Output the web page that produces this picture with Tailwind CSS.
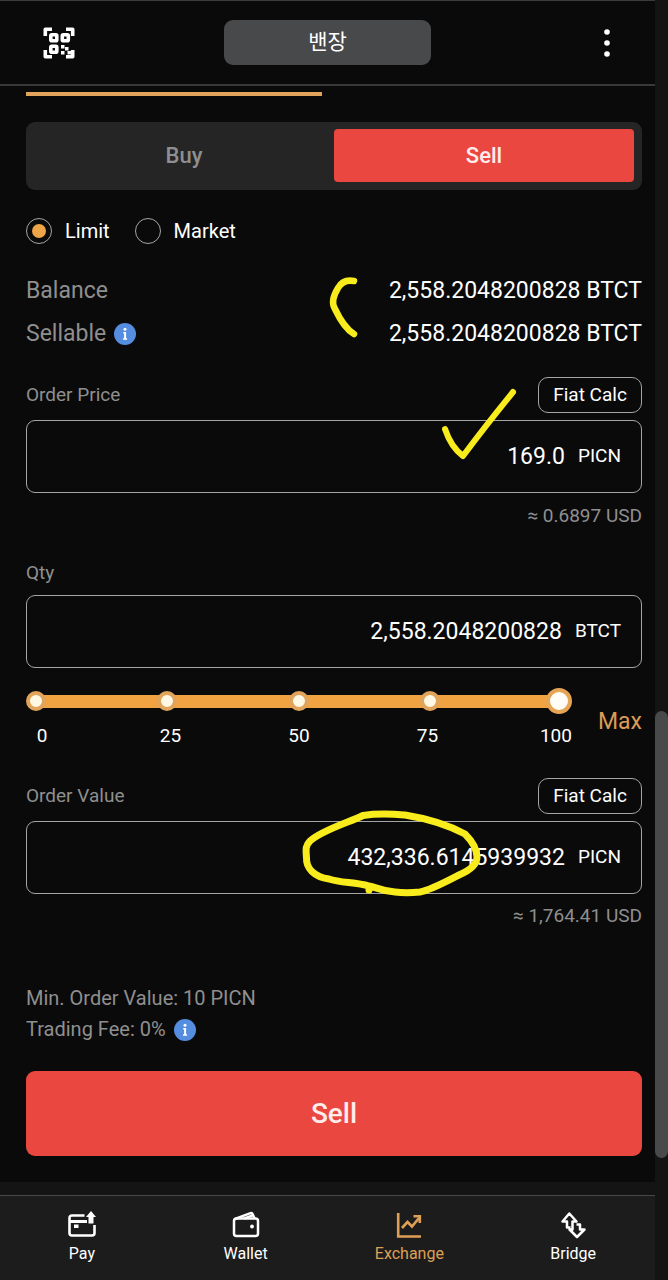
<!DOCTYPE html>
<html lang="en">
<head>
    <meta charset="UTF-8">
    <meta name="viewport" content="width=device-width, initial-scale=1.0">
    <title>Exchange</title>
    <script src="https://cdn.jsdelivr.net/npm/@tailwindcss/browser@4"></script>
</head>
<body class="bg-[#141414] text-white font-['Roboto','Noto_Sans_CJK_KR',sans-serif]">
<div class="relative flex min-h-screen">
    <div class="flex-1 min-w-0 flex flex-col">
        <!-- Header -->
        <header class="flex items-center justify-between h-[86px] px-8 bg-[#0a0a0a] border-t border-b-2 border-t-[#3a3b3c] border-b-[#38393a]">
            <button class="w-[54px] h-9 flex items-center justify-center" aria-label="Scan QR code">
                <svg class="w-8 h-8" viewBox="0 0 32 32" fill="none" stroke="#fff" stroke-width="3.600">
                    <path d="M2.300 9V2.300H9M23 2.300h6.700V9M2.300 23v6.700H9M23 29.700h6.700V23" stroke-linejoin="round"/>
                    <rect x="7.800" y="7.800" width="6" height="6" rx="1"/>
                    <rect x="19.300" y="7.800" width="6" height="6" rx="1"/>
                    <rect x="7.800" y="19.300" width="6" height="6" rx="1"/>
                    <path d="M18 18h3.500v3.500h-3.500zM22 20h3.500v3.500h-3.500zM18 24h3.500v3.500h-3.500zM24.500 24h3.500v3.500h-3.500z" fill="#fff" stroke="none"/>
                </svg>
            </button>
            <button class="w-[207px] h-[45px] rounded-[9px] bg-[#48494b] text-[21px]">밴장</button>
            <button class="w-[54px] h-9 flex items-center justify-end" aria-label="Menu">
                <svg class="w-8 h-8" viewBox="0 0 32 32" fill="#fff">
                    <circle cx="16" cy="5" r="2.800"/>
                    <circle cx="16" cy="16" r="2.800"/>
                    <circle cx="16" cy="27" r="2.800"/>
                </svg>
            </button>
        </header>

        <main class="bg-[#0a0a0a] pl-[26px] pr-[13px] pt-[6px] pb-[26px]">
            <div class="w-[48%] h-1 bg-[#e0a45c]"></div>

            <!-- Buy / Sell switch -->
            <div class="mt-[26px] h-[68px] px-2 pt-[7px] pb-2 rounded-[9px] bg-[#252525] flex text-[22px] font-medium">
                <button class="flex-1 text-[#8f8f8f]">Buy</button>
                <button class="flex-1 rounded bg-[#e9473f] text-[#ffeceb]">Sell</button>
            </div>

            <!-- Order type -->
            <div class="mt-7 flex gap-[25px] text-xl leading-[26px]">
                <label class="flex items-center gap-[13px]">
                    <input type="radio" name="type" checked class="appearance-none w-[26px] h-[26px] rounded-full border border-[#a5a5a5] p-[5px] bg-clip-content checked:bg-[#eda548]">
                    Limit
                </label>
                <label class="flex items-center gap-[13px]">
                    <input type="radio" name="type" class="appearance-none w-[26px] h-[26px] rounded-full border border-[#a5a5a5] p-[5px] bg-clip-content checked:bg-[#eda548]">
                    Market
                </label>
            </div>

            <!-- Balance -->
            <dl class="mt-[33px] flex flex-col gap-[15px] text-[23px] leading-7">
                <div class="flex justify-between">
                    <dt class="text-[#8f8f8f]">Balance</dt>
                    <dd>2,558.2048200828 BTCT</dd>
                </div>
                <div class="flex justify-between">
                    <dt class="flex items-center gap-2 text-[#8f8f8f]">
                        Sellable
                        <svg class="w-[22px] h-[22px]" viewBox="0 0 22 22" fill="#fff">
                            <circle cx="11" cy="11" r="11" fill="#558de0"/>
                            <circle cx="11" cy="6.200" r="1.500"/>
                            <path d="M9.200 9h2.900v6.300h1v1.500H9v-1.500h1.100v-4.800h-.9z"/>
                        </svg>
                    </dt>
                    <dd>2,558.2048200828 BTCT</dd>
                </div>
            </dl>

            <!-- Order price -->
            <section class="mt-[29px]">
                <div class="flex items-center justify-between">
                    <label for="price" class="text-[19px] text-[#8f8f8f]">Order Price</label>
                    <button class="w-[104px] h-9 rounded-[10px] border border-[#a5a5a5] text-[19px]">Fiat Calc</button>
                </div>
                <div class="mt-[7px] h-[73px] px-5 flex items-center gap-[13px] rounded-[9px] border border-[#a5a5a5]">
                    <input id="price" type="text" value="169.0" class="flex-1 min-w-0 pt-0.5 text-right text-[23px] outline-none">
                    <span class="text-[19px]">PICN</span>
                </div>
                <p class="mt-[9px] text-right text-[19px] leading-7 text-[#8f8f8f]">≈ 0.6897 USD</p>
            </section>

            <!-- Quantity -->
            <section class="mt-[29px]">
                <label for="qty" class="block text-[19px] leading-7 text-[#8f8f8f]">Qty</label>
                <div class="mt-2 h-[73px] px-5 flex items-center gap-[13px] rounded-[9px] border border-[#a5a5a5]">
                    <input id="qty" type="text" value="2,558.2048200828" class="flex-1 min-w-0 pt-0.5 text-right text-[23px] outline-none">
                    <span class="text-[19px]">BTCT</span>
                </div>
                <div class="mt-5 flex items-center gap-[26px]">
                    <div class="flex-1 min-w-0">
                        <div class="relative h-[26px]">
                            <div class="absolute inset-y-0 left-1 right-1 flex items-center"><div class="w-full h-[13px] rounded-full bg-[#f0a340]"></div></div>
                            <input type="range" min="0" max="100" value="100" aria-label="Percent of balance" class="absolute inset-0 w-full h-[26px] appearance-none bg-transparent [&::-webkit-slider-thumb]:appearance-none [&::-webkit-slider-thumb]:w-[26px] [&::-webkit-slider-thumb]:h-[26px] [&::-webkit-slider-thumb]:rounded-full [&::-webkit-slider-thumb]:bg-[#fffdf5] [&::-webkit-slider-thumb]:border-4 [&::-webkit-slider-thumb]:border-[#e5a555]">
                            <div class="absolute inset-y-0 left-0 right-0 flex items-center justify-between pointer-events-none">
                                <span class="w-5 h-5 rounded-full border-4 border-[#e0a55b] bg-[#fff8e4]"></span>
                                <span class="w-5 h-5 rounded-full border-4 border-[#e0a55b] bg-[#fff8e4]"></span>
                                <span class="w-5 h-5 rounded-full border-4 border-[#e0a55b] bg-[#fff8e4]"></span>
                                <span class="w-5 h-5 rounded-full border-4 border-[#e0a55b] bg-[#fff8e4]"></span>
                                <span class="w-5 h-5"></span>
                            </div>
                        </div>
                        <div class="mt-2 flex justify-between text-[19px] leading-7">
                            <span class="w-8 text-center">0</span>
                            <span class="w-8 text-center">25</span>
                            <span class="w-8 text-center">50</span>
                            <span class="w-8 text-center">75</span>
                            <span class="w-8 text-center">100</span>
                        </div>
                    </div>
                    <button class="pt-1.5 text-[23px] text-[#dc9a55]">Max</button>
                </div>
            </section>

            <!-- Order value -->
            <section class="mt-7">
                <div class="flex items-center justify-between">
                    <label for="value" class="text-[19px] text-[#8f8f8f]">Order Value</label>
                    <button class="w-[104px] h-9 rounded-[10px] border border-[#a5a5a5] text-[19px]">Fiat Calc</button>
                </div>
                <div class="mt-[7px] h-[73px] px-5 flex items-center gap-[13px] rounded-[9px] border border-[#a5a5a5]">
                    <input id="value" type="text" value="432,336.6145939932" class="flex-1 min-w-0 pt-0.5 text-right text-[23px] outline-none">
                    <span class="text-[19px]">PICN</span>
                </div>
                <p class="mt-2 text-right text-[19px] leading-7 text-[#8f8f8f]">≈ 1,764.41 USD</p>
            </section>

            <div class="mt-[53px] text-[20px] leading-[31px] text-[#8f8f8f]">
                <p>Min. Order Value: 10 PICN</p>
                <p class="flex items-center gap-2">
                    Trading Fee: 0%
                    <svg class="w-[22px] h-[22px]" viewBox="0 0 22 22" fill="#fff">
                        <circle cx="11" cy="11" r="11" fill="#558de0"/>
                        <circle cx="11" cy="6.200" r="1.500"/>
                        <path d="M9.200 9h2.900v6.300h1v1.500H9v-1.500h1.100v-4.800h-.9z"/>
                    </svg>
                </p>
            </div>

            <button class="mt-[26px] w-full h-[85px] rounded-[9px] bg-[#e9473f] text-[28px] font-medium text-[#ffeceb]">Sell</button>
        </main>

        <!-- Bottom navigation -->
        <nav class="mt-auto h-[85px] grid grid-cols-4 bg-[#1c1c1c] border-t border-[#484848] text-base leading-5">
            <a href="#" class="flex flex-col items-center pt-[15px] gap-[5px]">
                <svg class="w-7 h-7" viewBox="0 0 28 28" fill="none" stroke="#fff" stroke-width="2.600">
                    <path d="M16.500 4.500H4q-2.500 0-2.500 2.500v15q0 2.500 2.500 2.500h20q2.500 0 2.500-2.500v-8" stroke-linejoin="round"/>
                    <path d="M2 10.500h17" stroke-width="3"/>
                    <path d="M6 13.500h4.500v3.500H6zM23 0l5 6h-2.500v6.500h-5V6H18z" fill="#fff" stroke="none"/>
                </svg>
                Pay
            </a>
            <a href="#" class="flex flex-col items-center pt-[15px] gap-[5px]">
                <svg class="w-7 h-7" viewBox="0 0 28 28" fill="none" stroke="#fff" stroke-width="2.500" stroke-linejoin="round">
                    <rect x="2" y="7.500" width="24" height="17.500" rx="2.500"/>
                    <path d="M3 8L18.500 2.200q1.500-.5 2.200 1l2 4.500"/>
                    <path d="M12.500 7.500l8-3.200"/>
                    <circle cx="20" cy="15.500" r="1.900" fill="#fff" stroke="none"/>
                </svg>
                Wallet
            </a>
            <a href="#" class="flex flex-col items-center pt-[15px] gap-[5px] text-[#dda055]" aria-current="page">
                <svg class="w-7 h-7" viewBox="0 0 28 28" fill="none" stroke="currentColor" stroke-width="2.600">
                    <path d="M3.200 2v23.500H26"/>
                    <path d="M7 17l5.500-6 4.500 4.500 7-8.500"/>
                    <path d="M18.500 5.300h6.300V12"/>
                </svg>
                Exchange
            </a>
            <a href="#" class="flex flex-col items-center pt-[15px] gap-[5px]">
                <svg class="w-7 h-7" viewBox="0 0 28 28" fill="none" stroke="#fff" stroke-width="2.500" stroke-linejoin="round">
                    <path d="M11.500 16.500H8V10.500H3.500L10.300 2.500L17.500 10.500H13.500V18.500H10.500L18 26L25.500 18.500H21V13.500H17.500"/>
                </svg>
                Bridge
            </a>
        </nav>
    </div>

    <!-- Scroll rail -->
    <div class="w-[13px] pt-[711px] bg-[#141414]">
        <div class="h-[447px] rounded-full bg-[#48494b]"></div>
    </div>

    <!-- Pen marks over the form -->
    <svg class="absolute top-0 left-0 w-[668px] h-[1280px] pointer-events-none" viewBox="0 0 668 1280" fill="none" stroke="#f8ec1c" stroke-width="7" stroke-linecap="round" stroke-linejoin="round">
        <path d="M354 281Q343 279 338 288Q330 301 335 309Q344 328 354 334" stroke-width="6.500"/>
        <path d="M445 429Q451 447 463 456Q483 429 513 392" stroke-width="6"/>
        <path d="M363 815.500C380 813 392 814 405 815C430 819 450 826 465 834C472 841 477 850 477 857C477 866 466 872 459 875C449 880 431 890 420 892C411 893 402 893 395 892C381 891 376 887 369 886C355 882 341 883 329 879C314 877 306 868 306.500 858C306 850 305 846 310 841C322 830 350 822 363 815.500ZM369 886v4"/>
    </svg>
</div>
</body>
</html>
